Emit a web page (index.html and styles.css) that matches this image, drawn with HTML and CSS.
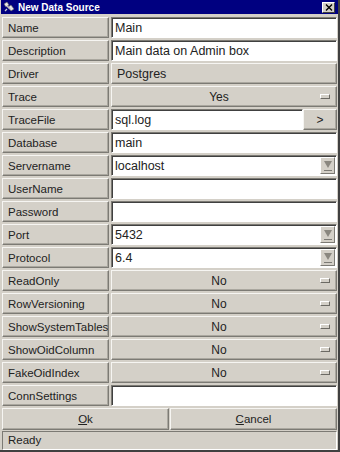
FILE: index.html
```html
<!DOCTYPE html>
<html lang="en">
<head>
  <meta charset="UTF-8" />
  <title>New Data Source</title>
  <link rel="stylesheet" href="styles.css">
</head>
<body>
  <div class="window">
    <div class="titlebar">
      <svg class="app-icon" width="12" height="12" viewBox="0 0 12 12">
        <path d="M1 3 L4 1 L6 4 L3 6 Z" fill="#e8e8e8" stroke="#606060" stroke-width="0.6"/>
        <path d="M5 6 L8 4 L11 8 L8 10 Z" fill="#e8e8e8" stroke="#606060" stroke-width="0.6"/>
        <path d="M4 5 L7 8" stroke="#c0c0c0" stroke-width="1.6"/>
        <path d="M2 10 L4 8" stroke="#d0d0d0" stroke-width="1.2"/>
      </svg>
      <span class="title">New Data Source</span>
      <span class="close">
        <svg width="8" height="7" viewBox="0 0 8 7"><path d="M1 0.5 L7 6.5 M7 0.5 L1 6.5" stroke="#000" stroke-width="1.4"/></svg>
      </span>
    </div>

    <div class="form">
      <div class="row"><div class="lbl">Name</div><div class="entry">Main</div></div>
      <div class="row"><div class="lbl">Description</div><div class="entry">Main data on Admin box</div></div>
      <div class="row"><div class="lbl">Driver</div><div class="static">Postgres</div></div>
      <div class="row"><div class="lbl">Trace</div><div class="option">Yes<span class="ind"></span></div></div>
      <div class="row">
        <div class="lbl">TraceFile</div>
        <div class="split"><div class="entry">sql.log</div><div class="btn small">&gt;</div></div>
      </div>
      <div class="row"><div class="lbl">Database</div><div class="entry">main</div></div>
      <div class="row"><div class="lbl">Servername</div><div class="entry combo">localhost<span class="drop"></span></div></div>
      <div class="row"><div class="lbl">UserName</div><div class="entry"></div></div>
      <div class="row"><div class="lbl">Password</div><div class="entry"></div></div>
      <div class="row"><div class="lbl">Port</div><div class="entry combo">5432<span class="drop"></span></div></div>
      <div class="row"><div class="lbl">Protocol</div><div class="entry combo">6.4<span class="drop"></span></div></div>
      <div class="row"><div class="lbl">ReadOnly</div><div class="option">No<span class="ind"></span></div></div>
      <div class="row"><div class="lbl">RowVersioning</div><div class="option">No<span class="ind"></span></div></div>
      <div class="row"><div class="lbl">ShowSystemTables</div><div class="option">No<span class="ind"></span></div></div>
      <div class="row"><div class="lbl">ShowOidColumn</div><div class="option">No<span class="ind"></span></div></div>
      <div class="row"><div class="lbl">FakeOidIndex</div><div class="option">No<span class="ind"></span></div></div>
      <div class="row"><div class="lbl">ConnSettings</div><div class="entry"></div></div>
    </div>

    <div class="buttons">
      <div class="btn"><u>O</u>k</div>
      <div class="btn"><u>C</u>ancel</div>
    </div>

    <div class="status">Ready</div>
  </div>
</body>
</html>
```

FILE: styles.css
```css
* {
  box-sizing: border-box;
  margin: 0;
  padding: 0;
}

body {
  background: #d4d0c8;
  font-family: "Liberation Sans", Arial, sans-serif;
  font-size: 11.5px;
  color: #222;
}

.window {
  width: 340px;
  height: 452px;
  background: #d4d0c8;
  border-right: 2px solid #404040;
  border-bottom: 2px solid #404040;
  padding: 0 0 0 1px;
  display: flex;
  flex-direction: column;
}

.titlebar {
  height: 15px;
  background: #000080;
  color: #fff;
  display: flex;
  align-items: center;
  padding: 0 3px 0 2px;
  margin-bottom: 2px;
}

.app-icon {
  margin-right: 3px;
}

.title {
  font-weight: bold;
  font-size: 10px;
  flex: 1;
}

.close {
  width: 13px;
  height: 11px;
  background: #d4d0c8;
  border: 1px solid;
  border-color: #fff #404040 #404040 #fff;
  display: flex;
  align-items: center;
  justify-content: center;
}

.form {
  display: flex;
  flex-direction: column;
  gap: 2px;
  padding: 1px 1px 0 1px;
}

.row {
  display: grid;
  grid-template-columns: 107px 1fr;
  gap: 2px;
  height: 21px;
}

.lbl,
.static,
.option,
.btn {
  border: 1px solid;
  border-color: #f6f5f2 #7c7a74 #7c7a74 #f6f5f2;
  box-shadow: inset -1px -1px #aaa79f;
  display: flex;
  align-items: center;
}

.lbl {
  padding-left: 5px;
  white-space: nowrap;
  overflow: hidden;
}

.static {
  padding-left: 5px;
  font-size: 12.5px;
}

.option,
.btn {
  justify-content: center;
  position: relative;
}

.option {
  font-size: 12px;
  padding-right: 10px;
}

.ind {
  position: absolute;
  right: 6px;
  top: 7px;
  width: 10px;
  height: 5px;
  border: 1px solid;
  border-color: #fff #6c6a64 #6c6a64 #fff;
}

.entry {
  background: #fff;
  border: 1px solid;
  border-color: #7c7a74 #fff #fff #7c7a74;
  box-shadow: inset 1px 1px #404040;
  padding-left: 3px;
  font-size: 12.5px;
  display: flex;
  align-items: center;
  position: relative;
}

.split {
  display: grid;
  grid-template-columns: 1fr 34px;
}

.btn.small {
  font-size: 12px;
}

.drop {
  position: absolute;
  right: 1px;
  top: 1px;
  bottom: 1px;
  width: 15px;
  background: #d4d0c8;
  border: 1px solid;
  border-color: #fff #7c7a74 #7c7a74 #fff;
}

.drop::before {
  content: "";
  position: absolute;
  left: 3px;
  top: 3px;
  border-left: 4px solid transparent;
  border-right: 4px solid transparent;
  border-top: 7px solid #8a877f;
}

.drop::after {
  content: "";
  position: absolute;
  left: 3px;
  bottom: 2px;
  width: 8px;
  height: 1px;
  background: #7c7a74;
}

.buttons {
  display: grid;
  grid-template-columns: 1fr 1fr;
  gap: 1px;
  height: 22px;
  padding: 0 1px;
  margin-top: 2px;
}

.status {
  margin: 1px 1px 0 1px;
  height: 20px;
  border: 1px solid;
  border-color: #7c7a74 #fff #fff #7c7a74;
  padding-left: 5px;
  display: flex;
  align-items: center;
}
```
